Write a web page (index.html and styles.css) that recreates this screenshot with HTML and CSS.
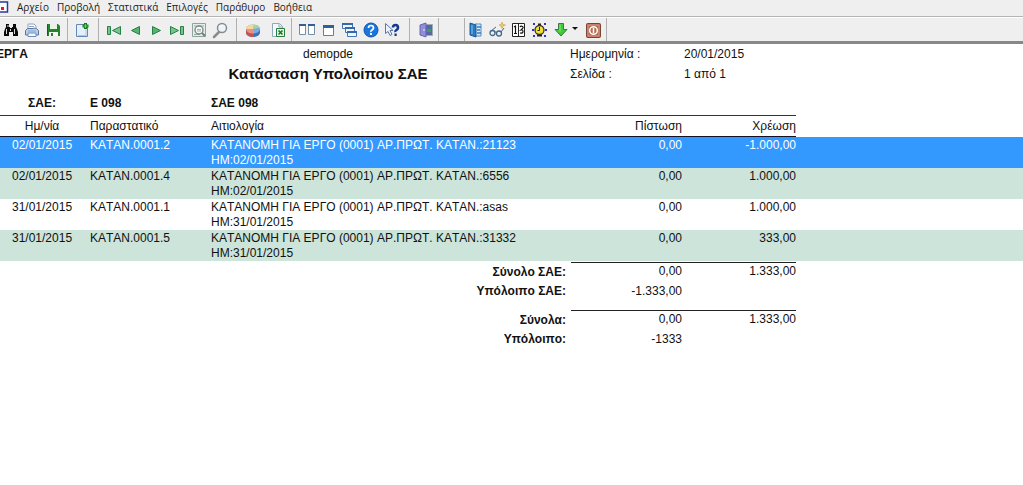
FILE: index.html
```html
<!DOCTYPE html>
<html lang="el">
<head>
<meta charset="utf-8">
<title>Κατάσταση Υπολοίπου ΣΑΕ</title>
<link rel="stylesheet" href="styles.css">
</head>
<body>
<nav class="menu">
  <svg class="menu-logo" viewBox="0 0 9 12" aria-hidden="true"><path d="M0 1H7.500V11H0" fill="#fff" stroke="#2a3a9c" stroke-width="1.500"/><rect x="1" y="6" width="3" height="3" fill="#e02020"/></svg>
  <button>Αρχείο</button>
  <button>Προβολή</button>
  <button>Στατιστικά</button>
  <button>Επιλογές</button>
  <button>Παράθυρο</button>
  <button>Βοήθεια</button>
</nav>
<div class="toolbar">
  <div class="group group-file">
    <button aria-label="Εύρεση"><svg viewBox="0 0 18 18"><path d="M4 3h3v3h1v1h2V6h1V3h3v3l1 2 1 3v4h-5v-4H7v4H2v-4l1-3 1-2z" fill="#0a0a0a"/><path d="M4.500 8v5M12.500 8v5M6 4v2M8.500 8v2" stroke="#d8d8d8"/></svg></button>
    <button aria-label="Εκτύπωση"><svg viewBox="0 0 18 18"><path d="M5 8V3h6l2 2v3" fill="#fff" stroke="#8fa3bd"/><path d="M2.500 9.500l2-2h9l2 2v4.500h-13z" fill="#b9cfe8" stroke="#5578a8"/><path d="M5 12h8v3.500H5z" fill="#f8fbff" stroke="#6d8fbd"/><path d="M6 5.500h5M5 10h8" stroke="#87a7d0"/><path d="M10 7h3" stroke="#e2a35c"/></svg></button>
    <button aria-label="Αποθήκευση"><svg viewBox="0 0 18 18"><path d="M3 3h11l2 2v10H3z" fill="#27832c"/><path d="M6 3h7v5H6z" fill="#e9f4e9"/><path d="M5 11h9v4H5z" fill="#f4f8f4"/><path d="M7 12h2v3H7z" fill="#27832c"/><path d="M3.500 3.500v11" stroke="#145d1c"/></svg></button>
  </div>
  <div class="group group-new">
    <button aria-label="Νέο"><svg viewBox="0 0 18 18"><path d="M3.500 3.500h9l2 2v10h-11z" fill="#e4effb" stroke="#6489b8"/><path d="M5 14.500h8M13 8v7" stroke="#a9c8ea"/><path d="M12.500 2v6M9.500 5h6" stroke="#137c23" stroke-width="3"/><path d="M12.500 3v4M10.500 5h4" stroke="#63cf59"/></svg></button>
  </div>
  <div class="group group-nav">
    <button aria-label="Πρώτο"><svg viewBox="0 0 18 18"><path d="M2.500 5.500h3v8h-3zM15.500 5.500v8l-8-4z" fill="#79c487" stroke="#27804a"/></svg></button>
    <button aria-label="Προηγούμενο"><svg viewBox="0 0 18 18"><path d="M13.500 5.500v8l-8-4z" fill="#55b56a" stroke="#27804a"/></svg></button>
    <button aria-label="Επόμενο"><svg viewBox="0 0 18 18"><path d="M5.500 5.500v8l8-4z" fill="#55b56a" stroke="#27804a"/></svg></button>
    <button aria-label="Τελευταίο"><svg viewBox="0 0 18 18"><path d="M2.500 5.500v8l8-4zM12.500 5.500h3v8h-3z" fill="#79c487" stroke="#27804a"/></svg></button>
    <button aria-label="Προεπισκόπηση"><svg viewBox="0 0 18 18"><path d="M3.500 2.500h13v13h-13z" fill="#e7eeea" stroke="#90a39d"/><path d="M5 5h10M5 13.500h6" stroke="#99aaa6"/><circle cx="10" cy="9" r="4" fill="#f7f9f8" stroke="#778c8a" stroke-width="1.400"/><path d="M8 8.500h4M8 10h4" stroke="#a0afaa"/><path d="M13 12l3 3" stroke="#6f807e" stroke-width="2"/></svg></button>
    <button aria-label="Μεγέθυνση"><svg viewBox="0 0 18 18"><path d="M9 11l-5 5" stroke="#8b8b8b" stroke-width="2.500" stroke-linecap="round"/><circle cx="12" cy="7" r="4.500" fill="#edf4f7" stroke="#868b90" stroke-width="1.500"/><path d="M10 6q1-2 3-1.500" fill="none" stroke="#fff"/></svg></button>
  </div>
  <div class="group group-data">
    <button aria-label="Γράφημα"><svg viewBox="0 0 18 18"><path d="M2 8v4q1 4 7 4t7-4V8z" fill="#3c70b7"/><ellipse cx="9" cy="8" rx="7" ry="4.500" fill="#78ace5"/><path d="M2 8Q2.500 3.500 10 3.500L9 8z" fill="#f3d9a0"/><path d="M9 8l1-4.500q4 .3 5.500 3z" fill="#b5d28c"/><path d="M2 8v4q1 4 8 4v-3.500Q3 12.500 2 8z" fill="#cd5146"/><path d="M2 8h7l1 4.500Q3 12.500 2 8z" fill="#f09082"/></svg></button>
    <button aria-label="Εξαγωγή σε Excel"><svg viewBox="0 0 18 18"><path d="M3.500 2.500h7l3 3v10h-10z" fill="#f3f8fc" stroke="#91a9bc"/><path d="M10 3v3h3" fill="none" stroke="#91a9bc"/><path d="M7.500 7.500h8v8h-8z" fill="#e7f5e6" stroke="#257d37"/><path d="M9.500 9.500l4 4M13.500 9.500l-4 4" stroke="#1c7933" stroke-width="1.700"/></svg></button>
  </div>
  <div class="group group-window">
    <button aria-label="Παράθεση"><svg viewBox="0 0 18 18"><path d="M1.500 3.500h6v10h-6zM10.500 3.500h6v10h-6z" fill="#fff" stroke="#7390a8"/><path d="M1 4h7M10 4h7" stroke="#315f9c" stroke-width="2"/></svg></button>
    <button aria-label="Παράθυρο"><svg viewBox="0 0 18 18"><path d="M4.500 4.500h10v10h-10z" fill="#fff" stroke="#5580bb"/><path d="M4 5.500h11" stroke="#315f9c" stroke-width="3"/></svg></button>
    <button aria-label="Επικάλυψη"><svg viewBox="0 0 18 18"><path d="M2.500 2.500h10v5h-10zM5.500 6.500h9v5h-9zM7.500 10.500h9v5h-9z" fill="#eef5fd" stroke="#4775b3"/><path d="M2 3h11M5 7h10M7 11h10" stroke="#3569ae" stroke-width="2"/></svg></button>
    <button aria-label="Βοήθεια"><svg viewBox="0 0 18 18"><circle cx="10" cy="9" r="7" fill="#1976dd" stroke="#1052a7"/><path d="M7.500 7q0-2.500 2.500-2.500T12.500 7Q12.500 8 11 9t-1 2" fill="none" stroke="#fff" stroke-width="1.700"/><path d="M9 12h2v2H9z" fill="#fff"/></svg></button>
    <button aria-label="Τι είναι αυτό"><svg viewBox="0 0 18 18"><path d="M3.500 2.500v10l2.500-2 2 4 2-1-2-4h3z" fill="#e9f2ff" stroke="#5878a8"/><path d="M11 6.500Q11 4 13.500 4T16 6.500q0 1.500-1.500 2.500T13.500 11" fill="none" stroke="#16368f" stroke-width="2.600"/><path d="M12.500 12.500h2.200v2.500h-2.200z" fill="#16368f"/></svg></button>
  </div>
  <div class="group group-exit">
    <button aria-label="Κλείσιμο"><svg viewBox="0 0 18 18"><path d="M7 3.500h8.500v11H7z" fill="#5967a5" stroke="#9cacb8"/><path d="M3 4l6-2v14l-6-2z" fill="#8f8fd8" stroke="#6a67b2"/><path d="M10 8h4v3h-4z" fill="#35a35a"/><path d="M7 8v2" stroke="#e8e8ff"/></svg></button>
  </div>
  <div class="group group-tools">
    <button aria-label="Αρχειοθήκη"><svg viewBox="0 0 18 18"><path d="M8 3h6v12H8z" fill="#d9ebfb" stroke="#538bc1"/><path d="M3 2l6 2v12l-6-2z" fill="#287bc4" stroke="#1b5a9c"/><path d="M5 4v9" stroke="#8ac5ef"/><path d="M10 6h4M10 9h3M10 12h4" stroke="#397cb9" stroke-width="1.500"/></svg></button>
    <button aria-label="Προβολή"><svg viewBox="0 0 18 18"><circle cx="4.500" cy="12" r="2.500" fill="#e8f0f7" stroke="#466786" stroke-width="1.300"/><circle cx="11" cy="12.500" r="2.500" fill="#e8f0f7" stroke="#466786" stroke-width="1.300"/><path d="M3 10l5-4M7 11.500q.5-1 1.500 0M13 11l3-4" fill="none" stroke="#466786"/><path d="M14 1l1 2.500 2.500.5-2.500 1-1 2.500-1-2.500-2-1 2-.5z" fill="#f2c94c" stroke="#c4973c" stroke-width=".5"/></svg></button>
    <button aria-label="Αρίθμηση"><svg viewBox="0 0 18 18"><path d="M3.500 2.500h12v13h-12z" fill="#fff" stroke="#222"/><path d="M9.500 2v14" stroke="#222"/><path d="M5 6l1.500-1v7M5 12.500h3M11 6q1-1.500 2.500-.5T13 8l-1 1q2-.5 2 1.500t-3 1.500" fill="none" stroke="#111" stroke-width="1.200"/></svg></button>
    <button aria-label="Υπενθύμιση"><svg viewBox="0 0 18 18"><path d="M3 2h2v2H3zM14 2h2v2h-2zM3 14h2v2H3zM14 14h2v2h-2zM2 8h2v2H2zM15 8h2v2h-2z" fill="#3030d0"/><path d="M8 3.500h3M7 14.500h5" stroke="#222" stroke-width="2"/><circle cx="9.500" cy="9" r="4.500" fill="#f2df35" stroke="#333" stroke-width="1.300"/><path d="M9.500 6v3.500h-2" fill="none" stroke="#222"/></svg></button>
    <button aria-label="Λήψη"><svg viewBox="0 0 18 18"><path d="M7.500 2.500h5v6h3.500l-6 6.500-6-6.500h3.500z" fill="#3ccc35" stroke="#447447"/><path d="M9 3.500v7" stroke="#92ee87"/></svg></button>
    <button class="drop" aria-label="Επιλογές λήψης"><svg viewBox="0 0 6 18"><path d="M0 6h6L3 9z" fill="#111"/></svg></button>
    <button class="power" aria-label="Έξοδος"><svg viewBox="0 0 18 18"><rect x="2.500" y="2.500" width="14" height="14" rx="1" fill="#b96850" stroke="#754638"/><path d="M4 4h11v11H4z" fill="none" stroke="#d99a82"/><circle cx="9.500" cy="9.500" r="3.800" fill="none" stroke="#fff" stroke-width="1.500"/><path d="M9.500 7v5" stroke="#fff" stroke-width="1.500"/></svg></button>
  </div>
</div>
<main class="report">
  <header class="report-head">
    <b class="firm">ΕΡΓΑ</b><span class="center">demopde</span><span>Ημερομηνία :</span><span>20/01/2015</span>
    <h1 class="title">Κατάσταση Υπολοίπου ΣΑΕ</h1><span>Σελίδα :</span><span>1 από 1</span>
  </header>
  <table class="ledger">
    <colgroup><col class="c-date"><col class="c-doc"><col class="c-text"><col class="c-credit"><col class="c-debit"><col></colgroup>
    <thead>
      <tr class="account"><th class="mid">ΣΑΕ:</th><th>Ε 098</th><th>ΣΑΕ 098</th><th></th><th></th><td></td></tr>
      <tr class="heads"><th class="mid">Ημ/νία</th><th>Παραστατικό</th><th>Αιτιολογία</th><th class="num">Πίστωση</th><th class="num">Χρέωση</th><td></td></tr>
    </thead>
    <tbody>
      <tr class="selected"><td class="date">02/01/2015</td><td>ΚΑΤΑΝ.0001.2</td><td>ΚΑΤΑΝΟΜΗ ΓΙΑ ΕΡΓΟ (0001) ΑΡ.ΠΡΩΤ. ΚΑΤΑΝ.:21123<br>ΗΜ:02/01/2015</td><td class="num">0,00</td><td class="num">-1.000,00</td><td></td></tr>
      <tr class="shade"><td class="date">02/01/2015</td><td>ΚΑΤΑΝ.0001.4</td><td>ΚΑΤΑΝΟΜΗ ΓΙΑ ΕΡΓΟ (0001) ΑΡ.ΠΡΩΤ. ΚΑΤΑΝ.:6556<br>ΗΜ:02/01/2015</td><td class="num">0,00</td><td class="num">1.000,00</td><td></td></tr>
      <tr><td class="date">31/01/2015</td><td>ΚΑΤΑΝ.0001.1</td><td>ΚΑΤΑΝΟΜΗ ΓΙΑ ΕΡΓΟ (0001) ΑΡ.ΠΡΩΤ. ΚΑΤΑΝ.:asas<br>ΗΜ:31/01/2015</td><td class="num">0,00</td><td class="num">1.000,00</td><td></td></tr>
      <tr class="shade"><td class="date">31/01/2015</td><td>ΚΑΤΑΝ.0001.5</td><td>ΚΑΤΑΝΟΜΗ ΓΙΑ ΕΡΓΟ (0001) ΑΡ.ΠΡΩΤ. ΚΑΤΑΝ.:31332<br>ΗΜ:31/01/2015</td><td class="num">0,00</td><td class="num">333,00</td><td></td></tr>
    </tbody>
    <tfoot>
      <tr class="sum"><th colspan="3">Σύνολο ΣΑΕ:</th><td class="num">0,00</td><td class="num">1.333,00</td><td></td></tr>
      <tr class="balance"><th colspan="3">Υπόλοιπο ΣΑΕ:</th><td class="num">-1.333,00</td><td></td><td></td></tr>
      <tr class="sum"><th colspan="3">Σύνολα:</th><td class="num">0,00</td><td class="num">1.333,00</td><td></td></tr>
      <tr class="balance"><th colspan="3">Υπόλοιπο:</th><td class="num">-1333</td><td></td><td></td></tr>
    </tfoot>
  </table>
</main>
</body>
</html>
```
FILE: styles.css
```css
body {
  margin: 0;
  background: #fff;
  color: #111;
  font: 12px/15px "Liberation Sans", Arial, sans-serif;
}

button {
  margin: 0;
  padding: 0;
  border: 0;
  background: none;
  color: inherit;
  font: inherit;
}

.menu {
  display: flex;
  align-items: center;
  gap: 8px;
  height: 17px;
  padding-bottom: 3px;
  box-sizing: border-box;
  background: #efefef;
  border-bottom: 1px solid #b4b4b4;
  color: #222;
  font: 10px/14px "Open Sans", "Noto Sans", sans-serif;
}

.menu-logo {
  width: 9px;
  height: 12px;
}

.toolbar {
  display: flex;
  height: 23px;
  background: #efefef;
  border-top: 1px solid #fff;
  border-bottom: 3px solid #888;
}

.group {
  display: flex;
  align-items: center;
  gap: 3px;
  border-right: 1px solid #b0b0b0;
}

.group button,
.group svg {
  display: block;
  width: 18px;
  height: 18px;
}

.group-file { padding: 0 5px 0 2px; }
.group-new { padding: 0 7px 0 5px; }
.group-nav { padding: 0 8px 0 6px; }
.group-data { gap: 7px; padding: 0 4px 0 7px; }
.group-window { padding: 0 9px 0 6px; }
.group-exit { padding: 0 3px 0 7px; }

.group-tools {
  margin-left: 25px;
  padding: 0 4px 0 2px;
  border-left: 1px solid #b0b0b0;
}

.group .drop,
.group .drop svg {
  width: 6px;
}

.group .power {
  margin-left: 3px;
}

.report {
  font-kerning: none;
}

.report-head {
  display: grid;
  grid-template-columns: 86px 484px 114px 1fr;
  grid-auto-rows: 20px;
  align-items: center;
}

.firm {
  margin-left: -4px;
}

.center {
  text-align: center;
}

.title {
  grid-column: 2;
  margin: 0;
  font-size: 15px;
  font-kerning: normal;
  line-height: 20px;
  text-align: center;
}

.ledger {
  width: 100%;
  margin-top: 8px;
  table-layout: fixed;
  border-collapse: separate;
  border-spacing: 0;
}

.c-date { width: 90px; }
.c-doc { width: 121px; }
.c-text { width: 360px; }
.c-credit { width: 111px; }
.c-debit { width: 114px; }

.ledger th,
.ledger td {
  padding: 0;
  text-align: left;
  vertical-align: top;
  white-space: nowrap;
}

.ledger .num { text-align: right; }
.ledger .mid { padding-right: 6px; text-align: center; }
.ledger .date { padding-left: 12px; }

.ledger .account th {
  height: 23px;
  vertical-align: middle;
  border-bottom: 1px solid #333;
}

.ledger .heads th {
  height: 20px;
  vertical-align: middle;
  border-bottom: 1px solid #112;
  font-weight: normal;
}

.ledger tbody td { padding-top: 1px; }
.ledger tbody tr:last-child td { border-bottom: 1px solid #fff; }
.selected { background: #3399ff; color: #fff; }
.shade { background: #cce4da; }

.ledger tfoot th {
  padding: 3px 5px 0 0;
  text-align: right;
}

.ledger .sum td {
  height: 18px;
  padding-top: 1px;
}

.ledger .sum .num { border-top: 1px solid #222; }

.ledger .balance td,
.ledger .balance th {
  height: 26px;
  padding-top: 2px;
}
```
